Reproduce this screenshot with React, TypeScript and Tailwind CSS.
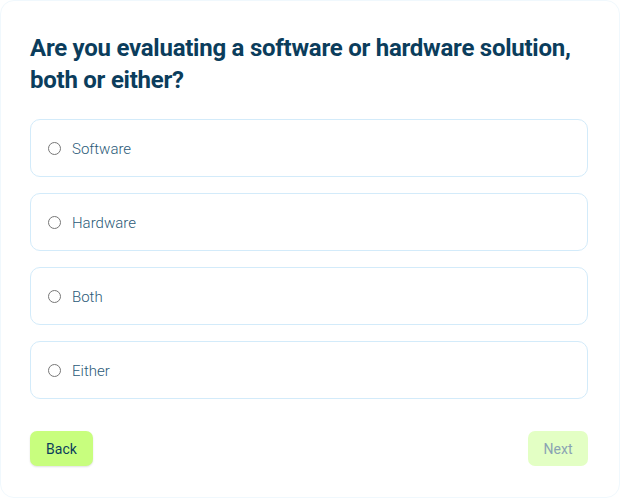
import React, { useState } from 'react';

const options = ['Software', 'Hardware', 'Both', 'Either'];

export default function App() {
  const [selected, setSelected] = useState<string | null>(null);

  return (
    <div className="w-[620px] h-[498px] bg-white" style={{ fontFamily: 'Roboto, "Liberation Sans", sans-serif' }}>
      <div className="w-full h-full rounded-[14px] border border-[#f0f8fd] bg-white pl-[29px] pr-[31px] pt-[31px]">
        <h2 className="text-[24px] leading-[32px] font-bold text-[#0b3d5c] tracking-[-0.25px]">
          Are you evaluating a software or hardware solution, both or either?
        </h2>

        <div className="mt-[23px] flex flex-col gap-[16px]">
          {options.map(o => (
            <label
              key={o}
              className="h-[58px] flex items-center gap-[11px] px-[17px] rounded-[10px] border border-[#d3ebfa] bg-white cursor-pointer"
              onClick={() => setSelected(o)}
            >
              <span className="w-[13px] h-[13px] rounded-full border border-[#777] flex items-center justify-center">
                {selected === o && <span className="w-[7px] h-[7px] rounded-full bg-[#0b3d5c]" />}
              </span>
              <span className="text-[15px] font-light text-[#2b5a78] pt-[2px]">{o}</span>
            </label>
          ))}
        </div>

        <div className="mt-[32px] flex justify-between">
          <button className="h-[35px] w-[63px] pt-[2px] rounded-[7px] bg-[#c8fe7e] text-[14px] text-[#0b3d5c] shadow-[0_1px_2px_rgba(0,0,0,0.12)]">
            Back
          </button>
          <button className="h-[35px] w-[60px] pt-[2px] rounded-[7px] bg-[#e3ffc4] text-[14px] text-[#8aa3b3]" disabled={!selected}>
            Next
          </button>
        </div>
      </div>
    </div>
  );
}
